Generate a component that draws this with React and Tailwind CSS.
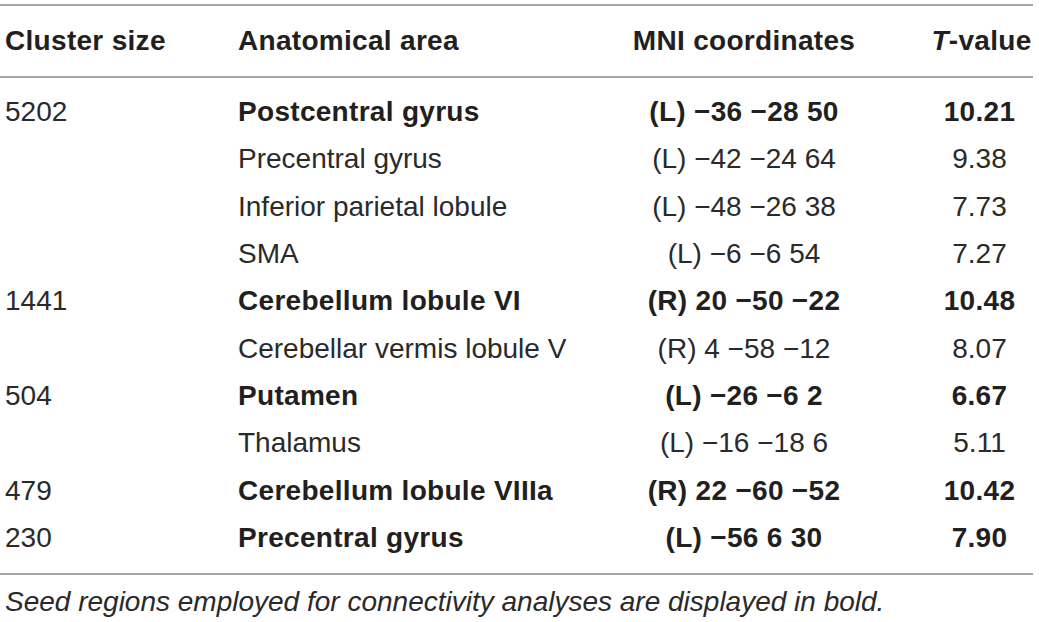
import React from "react";

const rows = [
  { size: "5202", area: "Postcentral gyrus", mni: "(L) −36 −28 50", t: "10.21", bold: true },
  { size: "", area: "Precentral gyrus", mni: "(L) −42 −24 64", t: "9.38" },
  { size: "", area: "Inferior parietal lobule", mni: "(L) −48 −26 38", t: "7.73" },
  { size: "", area: "SMA", mni: "(L) −6 −6 54", t: "7.27" },
  { size: "1441", area: "Cerebellum lobule VI", mni: "(R) 20 −50 −22", t: "10.48", bold: true },
  { size: "", area: "Cerebellar vermis lobule V", mni: "(R) 4 −58 −12", t: "8.07" },
  { size: "504", area: "Putamen", mni: "(L) −26 −6 2", t: "6.67", bold: true },
  { size: "", area: "Thalamus", mni: "(L) −16 −18 6", t: "5.11" },
  { size: "479", area: "Cerebellum lobule VIIIa", mni: "(R) 22 −60 −52", t: "10.42", bold: true },
  { size: "230", area: "Precentral gyrus", mni: "(L) −56 6 30", t: "7.90", bold: true },
];

const App = () => {
  return (
    <div className="min-h-screen bg-white">
      <div className="w-[1033px] whitespace-nowrap font-['Liberation_Sans',Arial,sans-serif] text-[28px] leading-none text-[#231f20]">
        <div className="mt-[4px] border-t-2 border-b-2 border-[#a6a6a6]">
          <div className="grid h-[70px] grid-cols-[238px_324px_364px_107px] items-center font-bold tracking-[0.3px]">
            <div className="pl-[5px]">Cluster size</div>
            <div>Anatomical area</div>
            <div className="text-center">MNI coordinates</div>
            <div className="pl-[4px] text-center">
              <span className="italic">T</span>-value
            </div>
          </div>
        </div>
        <div className="border-b-2 border-[#a6a6a6] pt-[10.33px] pb-[11.3px]">
          {rows.map((row, i) => (
            <div
              key={i}
              className={
                "grid h-[47.33px] grid-cols-[238px_324px_364px_107px] items-center " +
                (row.bold ? "font-bold tracking-[0.3px]" : "font-normal text-[#2a2a2a]")
              }
            >
              <div className="pl-[5px] font-normal tracking-normal text-[#2a2a2a]">{row.size}</div>
              <div>{row.area}</div>
              <div className="text-center">{row.mni}</div>
              <div className="text-center">{row.t}</div>
            </div>
          ))}
        </div>
        <p className="pt-[13px] pl-[5px] italic text-[#2a2a2a]">
          Seed regions employed for connectivity analyses are displayed in bold.
        </p>
      </div>
    </div>
  );
};

export default App;
